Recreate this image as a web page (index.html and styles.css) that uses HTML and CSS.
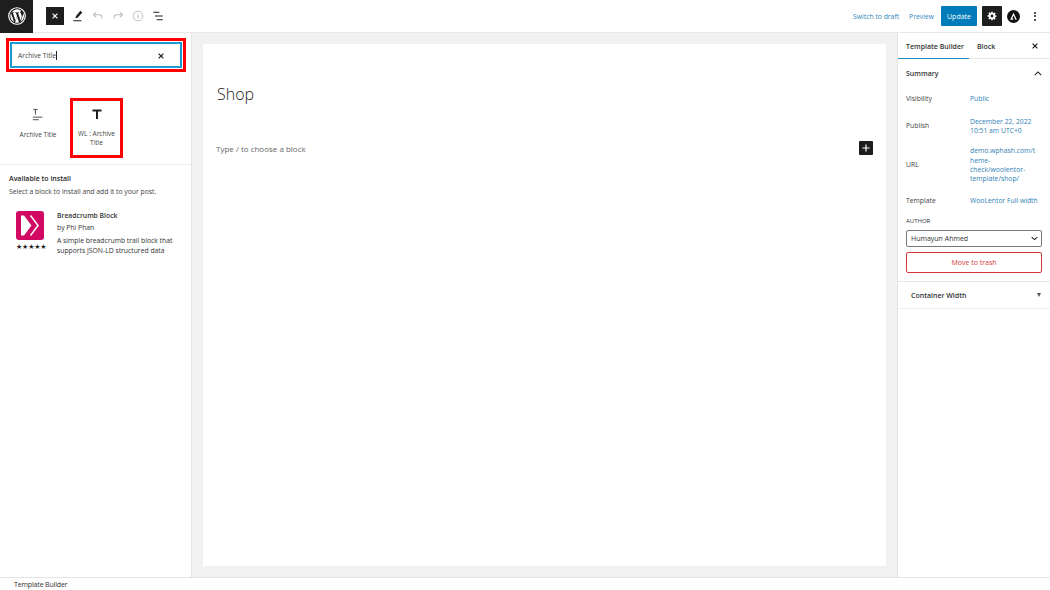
FILE: index.html
```html
<!DOCTYPE html>
<html lang="en">
<head>
	<meta charset="UTF-8">
	<title>Shop - Edit</title>
	<link rel="stylesheet" href="styles.css">
</head>
<body>
	<div class="editor">
		<header class="topbar">
			<div class="logo">
				<svg width="18" height="18" viewBox="0 0 20 20"><circle cx="10" cy="10" r="9.2" fill="none" stroke="#fff" stroke-width="1.3"/><path fill="#fff" d="M2.6 10c0 3 1.7 5.500 4.200 6.700L3.300 7a7.400 7.400 0 0 0-.7 3zm12.400-.4c0-.9-.3-1.600-.6-2.100-.4-.6-.7-1.100-.7-1.700 0-.7.500-1.300 1.200-1.300h.1A7.400 7.400 0 0 0 3.800 6h.5c.8 0 2-.1 2-.1.400 0 .5.600.1.600 0 0-.4 0-.9.100l2.800 8.400 1.700-5.100-1.200-3.300c-.4 0-.8-.1-.8-.1-.4 0-.4-.6 0-.6 0 0 1.300.1 2 .1.800 0 2-.1 2-.1.400 0 .5.600.1.600 0 0-.4 0-.9.100l2.800 8.300.8-2.600c.3-1.100.6-1.900.6-2.600zm-4.900 1-2.300 6.700a7.400 7.400 0 0 0 4.500-.1l-.1-.1zm6.600-4.300c0 .3.100.6.100.9 0 .8-.1 1.600-.6 2.800l-2.300 6.600a7.400 7.400 0 0 0 2.800-10.300z"/></svg>
			</div>
			<div class="tools">
				<button class="tool-close"><svg width="8" height="8" viewBox="0 0 10 10"><path d="M2 2l6 6M8 2L2 8" stroke="#fff" stroke-width="1.500"/></svg></button>
				<svg width="12" height="12" viewBox="0 0 14 14"><path fill="#1e1e1e" d="M9.800.8l2.300 2L6.500 9 3.900 9.700l.8-2.800zM1.500 12h9.500v1.200H1.500z"/></svg>
				<svg width="12" height="12" viewBox="0 0 14 14"><path fill="none" stroke="#bbb" stroke-width="1.200" d="M4.800 2.500L1.800 5.500l3 3M2 5.500h6.500c2 0 3.300 1.300 3.300 3v1.500"/></svg>
				<svg width="12" height="12" viewBox="0 0 14 14"><path fill="none" stroke="#bbb" stroke-width="1.200" d="M9.200 2.500l3 3-3 3M12 5.500H5.500c-2 0-3.300 1.300-3.300 3v1.500"/></svg>
				<svg width="12" height="12" viewBox="0 0 14 14"><circle cx="7" cy="7" r="5.600" fill="none" stroke="#bbb" stroke-width="1.100"/><path stroke="#bbb" stroke-width="1.200" d="M7 6v4M7 4v1.300"/></svg>
				<svg width="12" height="12" viewBox="0 0 14 14"><path stroke="#1e1e1e" stroke-width="1.300" d="M1.500 2.700h7M3.500 7h9M5.500 11.300h7"/></svg>
			</div>
			<div class="actions">
				<a class="link">Switch to draft</a>
				<a class="link link-preview">Preview</a>
				<button class="update">Update</button>
				<button class="settings"><svg width="10" height="10" viewBox="0 0 14 14"><path fill="#fff" fill-rule="evenodd" d="M6 1h2l.3 1.700 1 .4 1.400-1 1.400 1.400-1 1.400.4 1 1.700.3v2l-1.700.3-.4 1 1 1.400-1.400 1.400-1.400-1-1 .4L8 13H6l-.3-1.700-1-.4-1.400 1-1.400-1.400 1-1.400-.4-1L.8 8V6l1.700-.3.400-1-1-1.400 1.400-1.400 1.400 1 1-.4zM7 5a2 2 0 1 0 0 4 2 2 0 0 0 0-4z"/></svg></button>
				<span class="astra"><svg width="13" height="13" viewBox="0 0 13 13"><circle cx="6.500" cy="6.500" r="6.500" fill="#111"/><path fill="#fff" d="M6.500 2.800l3.300 6.900H8.400L6.500 5.600 5.400 8l1.100 1.700H3.200z"/></svg></span>
				<span class="more"><i></i><i></i><i></i></span>
			</div>
		</header>

		<div class="main">
			<aside class="inserter">
				<div class="search-frame">
					<div class="search">
						<span class="search-text">Archive Title<span class="caret"></span></span>
						<svg width="8" height="8" viewBox="0 0 10 10"><path d="M2 2l6 6M8 2L2 8" stroke="#1e1e1e" stroke-width="1.500"/></svg>
					</div>
				</div>
				<div class="results">
					<div class="block-item">
						<svg width="12" height="14" viewBox="0 0 14 16"><path stroke="#333" stroke-width="1" fill="none" d="M1.500 1.500h5M4 1.500v6M1 10.500h11M1 13.500h7"/></svg>
						<span>Archive Title</span>
					</div>
					<div class="block-item picked">
						<svg width="14" height="14" viewBox="0 0 14 14"><path fill="#1e1e1e" d="M2.500 2.500h9v1.900H8V12H6V4.400H2.500z"/></svg>
						<span>WL : Archive Title</span>
					</div>
				</div>
				<div class="install">
					<h3>Available to install</h3>
					<p class="install-note">Select a block to install and add it to your post.</p>
					<div class="plugin">
						<div class="plugin-side">
							<svg width="28" height="29" viewBox="0 0 28 29"><rect width="28" height="29" rx="3" fill="#d20962"/><path fill="#fff" d="M5 4.500h3l7.500 10-7.500 10H5z"/><path fill="none" stroke="#fff" stroke-width="1.500" d="M14.500 4.500l7.500 10-7.500 10"/></svg>
							<div class="stars">★★★★★</div>
						</div>
						<div class="plugin-body">
							<div class="plugin-name">Breadcrumb Block</div>
							<div class="plugin-by">by Phi Phan</div>
							<div class="plugin-desc">A simple breadcrumb trail block that supports JSON-LD structured data</div>
						</div>
					</div>
				</div>
			</aside>

			<main class="canvas">
				<div class="post">
					<h1>Shop</h1>
					<div class="prompt">
						<span>Type / to choose a block</span>
						<button class="add"><svg width="8" height="8" viewBox="0 0 10 10"><path d="M5 .5v9M.5 5h9" stroke="#fff" stroke-width="1.500"/></svg></button>
					</div>
				</div>
			</main>

			<aside class="sidebar">
				<div class="tabs">
					<span class="tab active">Template Builder</span>
					<span class="tab">Block</span>
					<svg width="8" height="8" viewBox="0 0 10 10"><path d="M2 2l6 6M8 2L2 8" stroke="#1e1e1e" stroke-width="1.500"/></svg>
				</div>
				<section class="summary">
					<div class="summary-head">
						<span>Summary</span>
						<svg width="8" height="5" viewBox="0 0 10 6"><path d="M1 5l4-4 4 4" fill="none" stroke="#1e1e1e" stroke-width="1.300"/></svg>
					</div>
					<div class="rows">
						<div class="row"><span>Visibility</span><a>Public</a></div>
						<div class="row row-publish"><span>Publish</span><a>December 22, 2022<br>10:51 am UTC+0</a></div>
						<div class="row"><span>URL</span><a>demo.wphash.com/t<br>heme-<br>check/woolentor-<br>template/shop/</a></div>
						<div class="row"><span>Template</span><a>WooLentor Full width</a></div>
					</div>
					<div class="author-label">AUTHOR</div>
					<div class="author">
						<span>Humayun Ahmed</span>
						<svg width="7" height="5" viewBox="0 0 8 5"><path d="M.8.8L4 3.800 7.200.8" fill="none" stroke="#1e1e1e" stroke-width="1.200"/></svg>
					</div>
					<button class="trash">Move to trash</button>
				</section>
				<div class="container-width">
					<span>Container Width</span>
					<i class="arrow"></i>
				</div>
			</aside>
		</div>

		<footer class="crumb">Template Builder</footer>
	</div>
</body>
</html>
```

FILE: styles.css
```css
* {box-sizing: border-box; margin: 0; padding: 0;}
html, body {width: 100%; height: 100%; overflow: hidden;}
body {background: #fff; color: #1e1e1e; font-family: "Open Sans", "Noto Sans", sans-serif; font-size: 7px;}
button {font-family: inherit; border: 0;}
svg {display: block;}

.editor {display: flex; flex-direction: column; height: 590px;}

.topbar {display: flex; align-items: center; height: 33px; border-bottom: 1px solid #e8e8e8; flex: none;}
.logo {display: flex; align-items: center; justify-content: center; width: 33px; height: 33px; background: #1e1e1e;}
.tools {display: flex; align-items: center; gap: 8px; margin-left: 13px;}
.tool-close {display: flex; align-items: center; justify-content: center; width: 18px; height: 18px; background: #1e1e1e;}
.actions {display: flex; align-items: center; margin-left: auto; padding-right: 14px;}
.link {color: #2f86bd; font-size: 6.800px; margin-right: 10px;}
.link-preview {margin-right: 7px;}
.update {width: 36px; height: 20px; background: #007cba; color: #fff; font-size: 7px; border-radius: 1px; margin-right: 5px;}
.settings {display: flex; align-items: center; justify-content: center; width: 20px; height: 20px; background: #1e1e1e; border-radius: 1px; margin-right: 5px;}
.astra {margin-right: 14px;}
.more {display: flex; flex-direction: column; gap: 1.500px; width: 2px;}
.more i {width: 2px; height: 2px; border-radius: 50%; background: #1e1e1e;}

.main {display: flex; flex: 1; min-height: 0;}

.inserter {width: 192px; flex: none; border-right: 1px solid #e4e4e4;}
.search-frame {margin: 5px 0 0 6px; width: 180px; height: 34px; border: 3px solid #f00; padding: 1px;}
.search {display: flex; align-items: center; justify-content: space-between; height: 100%; border: 2px solid #1f9ad6; padding: 1px 15px 0 6px;}
.search-text {font-size: 6.700px; color: #444;}
.caret {display: inline-block; width: 1px; height: 9px; background: #222; vertical-align: -2px;}

.results {display: flex; padding: 26px 0 6px 8px; border-bottom: 1px solid #eee;}
.block-item {display: flex; flex-direction: column; align-items: center; width: 60px; height: 60px; padding-top: 10px; text-align: center; line-height: 9px; color: #444; font-size: 6.500px;}
.block-item svg {margin-bottom: 8px;}
.block-item.picked {width: 53px; margin-left: 2px; border: 3px solid #f00; padding: 6px 0 0;}
.block-item.picked span {width: 40px;}

.install {padding: 9px 9px 0;}
.install h3 {font-size: 7px; font-weight: 600; line-height: 10px;}
.install-note {font-size: 6.800px; color: #444; line-height: 10px; margin-top: 3px;}
.plugin {display: flex; margin-top: 14px; padding-left: 7px;}
.plugin-side {width: 31px; flex: none;}
.stars {font-size: 7px; line-height: 8px; margin-top: 3px; letter-spacing: -.2px; font-family: "DejaVu Sans", sans-serif; white-space: nowrap;}
.plugin-body {margin-left: 10px; font-size: 6.800px; color: #333; line-height: 10px;}
.plugin-name {font-weight: 600;}
.plugin-by {margin-top: 2px;}
.plugin-desc {margin-top: 3px; width: 122px;}

.canvas {flex: 1; background: #f1f1f1; padding: 11px;}
.post {background: #fff; height: 100%; padding: 38px 13px 0 14px;}
.post h1 {font-size: 16px; font-weight: 300; line-height: 25px; color: #222;}
.prompt {display: flex; align-items: center; justify-content: space-between; margin-top: 34px; margin-left: -1px; color: #666; font-size: 8px;}
.add {display: flex; align-items: center; justify-content: center; width: 14px; height: 14px; background: #1e1e1e; border-radius: 1px;}

.sidebar {width: 153px; flex: none; border-left: 1px solid #e4e4e4;}
.tabs {display: flex; align-items: center; height: 26px; border-bottom: 1px solid #e8e8e8;}
.tabs svg {margin-left: auto; margin-right: 11px;}
.tab {display: flex; align-items: center; height: 26px; padding: 2px 8px 0; font-size: 7px; font-weight: 600; color: #333; white-space: nowrap;}
.tab.active {border-bottom: 1.500px solid #1e8cbe; width: 71px; padding: 2px 0 0 8px;}
.summary {padding: 0 8px 8px; border-bottom: 1px solid #e8e8e8;}
.summary-head {display: flex; align-items: center; justify-content: space-between; height: 28px; font-size: 7px; font-weight: 600; color: #333;}
.rows {padding-top: 7.350px;}
.row {display: flex; align-items: center; margin-bottom: 13px; font-size: 6.800px; color: #444; line-height: 9.300px;}
.row-publish {margin-bottom: 11px;}
.row:last-child {margin-bottom: 0;}
.row span {width: 64px; flex: none;}
.row a {color: #2f7fb5;}
.author-label {font-size: 6px; color: #333; line-height: 8px; margin-top: 11.700px;}
.author {display: flex; align-items: center; justify-content: space-between; height: 17px; margin-top: 5px; border: 1px solid #777; border-radius: 2px; padding: 0 3px 0 4px; font-size: 7px; color: #333;}
.trash {display: block; width: 100%; height: 21px; margin-top: 5px; background: #fff; border: 1px solid #d63638; border-radius: 2px; color: #d63638; font-size: 7px;}
.container-width {display: flex; align-items: center; justify-content: space-between; height: 27px; padding: 0 9px 0 13px; border-bottom: 1px solid #eee; font-size: 7px; font-weight: 600; color: #333;}
.arrow {width: 0; height: 0; border: 2.500px solid transparent; border-top: 4px solid #555; border-bottom: 0;}

.crumb {height: 13px; flex: none; border-top: 1px solid #e4e4e4; padding-left: 14px; font-size: 7px; letter-spacing: -.15px; line-height: 13px; color: #333;}
```
